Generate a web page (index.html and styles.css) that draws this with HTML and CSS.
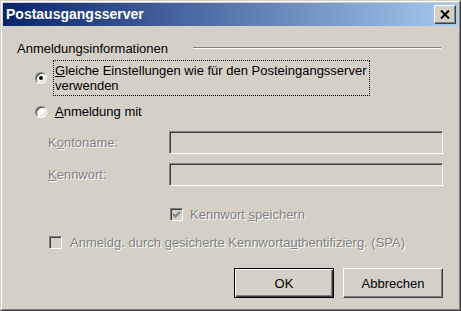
FILE: index.html
```html
<!DOCTYPE html>
<html lang="de">
<head>
    <meta charset="UTF-8">
    <title>Postausgangsserver</title>
    <link rel="stylesheet" href="styles.css">
</head>
<body>
    <div class="window">
        <div class="frame">
            <div class="titlebar">
                <span class="title">Postausgangsserver</span>
                <span class="close">
                    <svg width="10" height="9" viewBox="0 0 10 9">
                        <path d="M1 0.5 L9 8.5 M9 0.5 L1 8.5" stroke="#000" stroke-width="2" fill="none"/>
                    </svg>
                </span>
            </div>

            <div class="content">
                <div class="group-head">
                    <span class="group-label">Anmeldungsinformationen</span>
                    <span class="etch"></span>
                </div>

                <div class="option same">
                    <span class="radio checked"></span>
                    <span class="option-label focus"><u>G</u>leiche Einstellungen wie für den Posteingangsserver<br>verwenden</span>
                </div>

                <div class="option login">
                    <span class="radio"></span>
                    <span class="option-label"><u>A</u>nmeldung mit</span>
                </div>

                <div class="field account">
                    <span class="field-label disabled">K<u>o</u>ntoname:</span>
                    <span class="textbox"></span>
                </div>

                <div class="field password">
                    <span class="field-label disabled"><u>K</u>ennwort:</span>
                    <span class="textbox"></span>
                </div>

                <div class="check save">
                    <span class="checkbox">
                        <svg width="11" height="11" viewBox="0 0 11 11">
                            <path d="M2 5 L4.5 7.5 L9 3" stroke="#808080" stroke-width="2" fill="none"/>
                        </svg>
                    </span>
                    <span class="disabled">Kennwort <u>s</u>peichern</span>
                </div>

                <div class="check spa">
                    <span class="checkbox"></span>
                    <span class="disabled">Anmeldg. durch gesicherte Kennworta<u>u</u>thentifizierg. (SPA)</span>
                </div>

                <div class="buttons">
                    <button class="btn default">OK</button>
                    <button class="btn">Abbrechen</button>
                </div>
            </div>
        </div>
    </div>
</body>
</html>
```

FILE: styles.css
```css
body {
    margin: 0;
    font-family: "Liberation Sans", Arial, sans-serif;
    font-size: 13px;
    color: #000;
    background: #d4d0c8;
}
.window {
    width: 461px;
    height: 311px;
    box-sizing: border-box;
    border: 1px solid;
    border-color: #d4d0c8 #404040 #404040 #d4d0c8;
    background: #d4d0c8;
}
.frame {
    height: 100%;
    box-sizing: border-box;
    border: 1px solid;
    border-color: #fff #808080 #808080 #fff;
    padding: 1px;
}
.titlebar {
    display: flex;
    justify-content: space-between;
    align-items: flex-start;
    height: 23px;
    padding-left: 3px;
    background: linear-gradient(to right, #0a246a, #a6caf0);
}
.title {
    color: #fff;
    font-weight: bold;
    font-size: 14px;
    line-height: 23px;
}
.close {
    display: flex;
    align-items: center;
    justify-content: center;
    width: 22px;
    height: 19px;
    margin: 2px 2px 0 0;
    box-sizing: border-box;
    background: #d4d0c8;
    border: 1px solid;
    border-color: #fff #404040 #404040 #fff;
    box-shadow: inset -1px -1px #808080;
}
.content {
    padding: 15px 15px 0 14px;
}
.group-head {
    display: flex;
    align-items: center;
    line-height: 15px;
}
.group-label {
    width: 176px;
}
.etch {
    flex: 1;
    height: 1px;
    margin-right: 2px;
    margin-top: -2px;
    background: #808080;
    border-bottom: 1px solid #fff;
}
.option {
    display: flex;
    align-items: center;
    line-height: 15px;
    padding-left: 18px;
}
.option.same {
    margin-top: 4px;
}
.option.login {
    margin-top: 5px;
}
.option-label {
    margin-left: 6px;
    padding: 2px 3px 2px 1px;
    border: 1px solid transparent;
}
.option-label.focus {
    border: 1px dotted #000;
}
.radio {
    position: relative;
    width: 12px;
    height: 12px;
    box-sizing: border-box;
    border-radius: 50%;
    border: 1px solid;
    border-color: #808080 #fff #fff #808080;
    box-shadow: inset 1px 1px #404040, inset -1px -1px #d4d0c8;
    background: #fff;
}
.radio.checked::after {
    content: "";
    position: absolute;
    left: 3px;
    top: 3px;
    width: 4px;
    height: 4px;
    border-radius: 50%;
    background: #000;
}
.field {
    display: flex;
    align-items: center;
    padding-left: 31px;
}
.field.account {
    margin-top: 9px;
}
.field.password {
    margin-top: 9px;
}
.field-label {
    width: 121px;
}
.textbox {
    flex: 1;
    height: 23px;
    box-sizing: border-box;
    border: 1px solid;
    border-color: #808080 #fff #fff #808080;
    box-shadow: inset 1px 1px #404040, inset -1px -1px #d4d0c8;
    background: #d4d0c8;
}
.disabled {
    color: #808080;
    text-shadow: 1px 1px #fff;
}
.disabled u {
    text-decoration-color: #808080;
}
.check {
    display: flex;
    align-items: center;
    line-height: 15px;
}
.check.save {
    margin-top: 21px;
    padding-left: 153px;
}
.check.spa {
    margin-top: 13px;
    padding-left: 32px;
}
.checkbox {
    display: flex;
    align-items: center;
    justify-content: center;
    width: 13px;
    height: 13px;
    box-sizing: border-box;
    margin-right: 7px;
    border: 1px solid;
    border-color: #808080 #fff #fff #808080;
    box-shadow: inset 1px 1px #404040, inset -1px -1px #d4d0c8;
    background: #d4d0c8;
}
.check.spa .checkbox {
    margin-right: 8px;
}
.buttons {
    display: flex;
    justify-content: flex-end;
    gap: 9px;
    margin-top: 18px;
}
.btn {
    width: 100px;
    height: 30px;
    box-sizing: border-box;
    font-family: "Liberation Sans", Arial, sans-serif;
    font-size: 13px;
    color: #000;
    background: #d4d0c8;
    border: 1px solid;
    border-color: #fff #404040 #404040 #fff;
    box-shadow: inset -1px -1px #808080;
    padding: 0;
}
.btn.default {
    border: 1px solid #000;
    box-shadow: inset 1px 1px #fff, inset -1px -1px #404040, inset -2px -2px #808080;
}
```
